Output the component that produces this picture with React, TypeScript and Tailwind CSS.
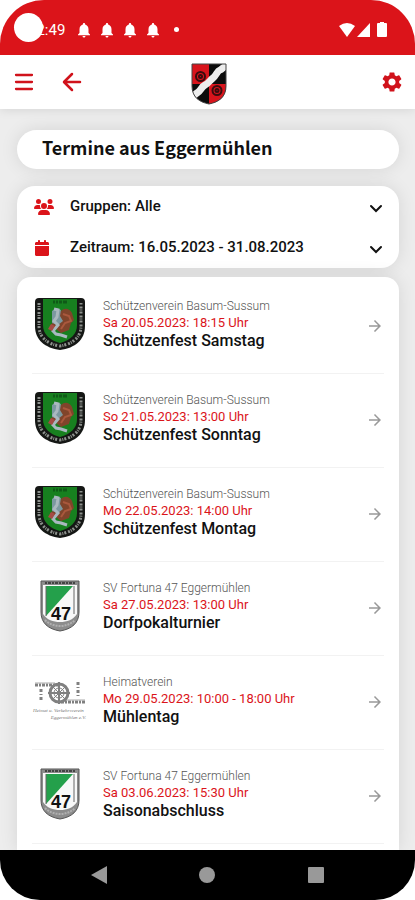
import { FaUsers, FaCalendar } from "react-icons/fa6";
import { MdArrowForward, MdNotifications, MdSettings } from "react-icons/md";

type Club = "schuetzen" | "fortuna" | "heimat";

interface Termin {
  club: Club;
  verein: string;
  zeit: string;
  titel: string;
}

const termine: Termin[] = [
  { club: "schuetzen", verein: "Schützenverein Basum-Sussum", zeit: "Sa 20.05.2023: 18:15 Uhr", titel: "Schützenfest Samstag" },
  { club: "schuetzen", verein: "Schützenverein Basum-Sussum", zeit: "So 21.05.2023: 13:00 Uhr", titel: "Schützenfest Sonntag" },
  { club: "schuetzen", verein: "Schützenverein Basum-Sussum", zeit: "Mo 22.05.2023: 14:00 Uhr", titel: "Schützenfest Montag" },
  { club: "fortuna", verein: "SV Fortuna 47 Eggermühlen", zeit: "Sa 27.05.2023: 13:00 Uhr", titel: "Dorfpokalturnier" },
  { club: "heimat", verein: "Heimatverein", zeit: "Mo 29.05.2023: 10:00 - 18:00 Uhr", titel: "Mühlentag" },
  { club: "fortuna", verein: "SV Fortuna 47 Eggermühlen", zeit: "Sa 03.06.2023: 15:30 Uhr", titel: "Saisonabschluss" },
];

function TownArms() {
  return (
    <svg width="36" height="42" viewBox="0 0 36 42" aria-label="Wappen Eggermühlen">
      <clipPath id="arms">
        <path d="M1 1h34v22c0 11-7 16-17 18C8 39 1 34 1 23z" />
      </clipPath>
      <g clipPath="url(#arms)">
        <path fill="#0c0c0c" d="M0 0h36v42H0z" />
        <path fill="#d8141c" d="M0 0h18v21H0zM18 21h18v21H18z" />
        <path d="M38 3c-5-1-6 3-9 4s-4 6-7 8-4 5-8 7-4 6-8 8-3 5-6 6" fill="none" stroke="#eee" strokeWidth="7" />
        <g fill="none" stroke="#3a0c0e" strokeWidth="2">
          <circle cx="9.5" cy="13.5" r="4.5" />
          <circle cx="9.5" cy="13.5" r="1.5" />
          <circle cx="26" cy="27.5" r="4.5" />
          <circle cx="26" cy="27.5" r="1.5" />
        </g>
      </g>
      <path d="M1 1h34v22c0 11-7 16-17 18C8 39 1 34 1 23z" fill="none" stroke="#444" strokeWidth="1" />
    </svg>
  );
}

function SchuetzenCrest() {
  return (
    <svg width="52" height="54" viewBox="0 0 52 54" aria-hidden="true">
      <path d="M5 1h42q4 0 4 4v24c0 14-10 22-25 24C11 51 1 43 1 29V5q0-4 4-4z" fill="#151715" />
      <path d="M5 6v23c0 11 8 18 21 20 13-2 21-9 21-20V6" fill="none" stroke="#8d918d" strokeWidth="3" strokeDasharray="2 1 1 1 2 2" />
      <path d="M9 2h34v26c0 9-6 15-17 18C15 43 9 37 9 28z" fill="#17801f" />
      <path d="M19 5h2m1 0h2m1 0h3m1 0h4" stroke="#0f5a17" strokeWidth="3" />
      <path d="M27 14c4-4 9-2 11 2l2 7-3 3-2 7-8 3-5-4-6-3 4-5-1-5z" fill="#80442b" />
      <path d="m29 17 6 2 2 5-6 2-4 6" fill="none" stroke="#a9583d" strokeWidth="2" />
      <path d="m18 14 4-3 5 2-1 6 3 5-5 4-6-2z" fill="#7b98a0" />
      <path d="m20 12 4 1-1 7-3 4 4 4-5 6 3 3 5 1 6 2" fill="none" stroke="#a9b8bf" strokeWidth="3" />
      <path d="m17 27 4 2-3 5-4-2z" fill="#a64b45" />
    </svg>
  );
}

function FortunaCrest() {
  return (
    <svg width="40" height="52" viewBox="0 0 40 52" aria-hidden="true">
      <path d="M1 1h38v31c0 11-7 17-19 19C8 49 1 43 1 32z" fill="#8c8c8c" stroke="#555" />
      <path d="M3 5h34v29c-4 6-10 8-17 8S7 40 3 34z" fill="#f8f8f8" />
      <path d="M6 6h27L6 36z" fill="#24a04b" />
      <path d="M6 6v30M34 6v28" stroke="#666" strokeWidth="1" />
      <path d="M5 3h30" stroke="#444" strokeWidth="2" strokeDasharray="2 1 3 1" />
      <path d="M5 40c8 8 22 8 30 0" fill="none" stroke="#b0b0b0" strokeWidth="2" strokeDasharray="2 1" />
      <text x="21" y="40" textAnchor="middle" fontSize="18" fontWeight="700" fontFamily="Liberation Sans, sans-serif" fill="#111">47</text>
    </svg>
  );
}

function HeimatLogo() {
  return (
    <svg width="56" height="42" viewBox="0 0 56 42" aria-hidden="true">
      <g fill="none" stroke="#808080">
        <path d="M3 6h24M29 23h25" strokeWidth="3" strokeDasharray="3 1 2 1" />
        <path d="M3 4h20M33 21h20" stroke="#aaa" strokeWidth="1" />
        <path d="M9 10v13M46 3v15" strokeWidth="3" strokeDasharray="3 2 1 2" />
        <circle cx="27" cy="14" r="9" strokeWidth="3" />
        <circle cx="27" cy="14" r="5" strokeWidth="1" />
        <path d="M27 3v22M16 14h22" strokeWidth="2" />
        <path d="m20 7 14 14M34 7 20 21" strokeWidth="1" />
      </g>
      <g fill="#777" fontFamily="Liberation Serif, serif" fontStyle="italic" fontSize="5">
        <text x="1" y="33">Heimat u. Verkehrsverein</text>
        <text x="54" y="40" textAnchor="end">Eggermühlen e.V.</text>
      </g>
    </svg>
  );
}

function ClubLogo({ club }: { club: Club }) {
  if (club === "schuetzen") return <SchuetzenCrest />;
  if (club === "fortuna") return <FortunaCrest />;
  return <HeimatLogo />;
}

function Chevron() {
  return (
    <svg className="pointer-events-none mt-1 shrink-0" width="14" height="10" viewBox="0 0 14 10" aria-hidden="true">
      <path d="m2 2 5 5 5-5" fill="none" stroke="#111" strokeWidth="2" strokeLinecap="round" />
    </svg>
  );
}

function StatusBar() {
  return (
    <div className="relative flex h-[55px] items-center bg-[#db141a] px-7 pt-1 text-white">
      <span className="absolute top-[13px] left-[14px] z-10 size-[29px] rounded-full bg-white" />
      <span className="text-[15px] leading-5">12:49</span>
      <div className="ml-2.5 flex items-center gap-[5px]">
        {[0, 1, 2, 3].map((n) => (
          <MdNotifications key={n} className="size-[18px]" />
        ))}
      </div>
      <span className="ml-3 size-[5px] rounded-full bg-white" />
      <div className="ml-auto flex items-center">
        <svg width="16" height="14" viewBox="0 0 16 14" fill="currentColor" aria-hidden="true">
          <path d="M0 3q8-6 16 0L8 14z" />
        </svg>
        <svg className="ml-0.5" width="13" height="14" viewBox="0 0 13 14" fill="currentColor" aria-hidden="true">
          <path d="M13 0v14H0z" />
        </svg>
        <svg className="ml-[7px]" width="10" height="15" viewBox="0 0 10 15" fill="currentColor" aria-hidden="true">
          <path d="M3 0h4v1h2q1 0 1 1v12q0 1-1 1H1q-1 0-1-1V2q0-1 1-1h2z" />
        </svg>
      </div>
    </div>
  );
}

export default function App() {
  return (
    <div className="bg-white font-['Roboto',sans-serif] text-[#111]">
      <div className="flex min-h-screen flex-col overflow-hidden rounded-t-[44px] rounded-b-[40px] bg-[#ededed]">
        <StatusBar />

        <header className="grid h-[54px] grid-cols-3 items-center bg-white pr-[11px] pl-3.5 text-[#d0121b] shadow-[0_1px_10px_rgba(0,0,0,0.1)]">
          <div className="flex items-center gap-7">
            <button type="button" aria-label="Menü">
              <svg width="20" height="20" viewBox="0 0 20 20" aria-hidden="true">
                <path d="M2 3h16M2 10h16M2 17h16" fill="none" stroke="currentColor" strokeWidth="2.3" strokeLinecap="round" />
              </svg>
            </button>
            <button type="button" aria-label="Zurück">
              <svg width="20" height="20" viewBox="0 0 20 20" aria-hidden="true">
                <path d="M18 10H3M10 2l-8 8 8 8" fill="none" stroke="currentColor" strokeWidth="2.5" strokeLinecap="round" strokeLinejoin="round" />
              </svg>
            </button>
          </div>
          <div className="flex justify-center pt-1">
            <TownArms />
          </div>
          <button type="button" aria-label="Einstellungen" className="justify-self-end">
            <MdSettings className="size-6" />
          </button>
        </header>

        <main className="flex grow flex-col pt-[21px] pr-4 pl-[17px]">
          <h1 className="rounded-[20px] bg-white px-[25px] pt-[5px] pb-2.5 font-['Noto_Sans_CJK_SC','Noto_Sans',sans-serif] text-lg leading-6 font-bold shadow-[0_0_18px_rgba(0,0,0,0.1)]">
            Termine aus Eggermühlen
          </h1>

          <section className="mt-[17px] rounded-[18px] bg-white pr-4 pl-[17px] text-[15px] font-medium shadow-[0_0_18px_rgba(0,0,0,0.1)]">
            <div className="flex h-[41px] items-center">
              <FaUsers className="mr-4 size-5 shrink-0 text-[#db141a]" />
              <label htmlFor="gruppen">Gruppen:</label>
              <select id="gruppen" className="ml-1 grow appearance-none bg-transparent">
                <option>Alle</option>
              </select>
              <Chevron />
            </div>
            <div className="flex h-[41px] items-center">
              <FaCalendar className="mr-5 size-4 shrink-0 text-[#db141a]" />
              <label htmlFor="zeitraum">Zeitraum:</label>
              <select id="zeitraum" className="ml-1 grow appearance-none bg-transparent">
                <option>16.05.2023 - 31.08.2023</option>
              </select>
              <Chevron />
            </div>
          </section>

          <ul className="mt-[9px] grow rounded-t-[14px] bg-white px-[15px] pt-[3px] shadow-[0_0_18px_rgba(0,0,0,0.1)]">
            {termine.map((t) => (
              <li key={t.titel} className="border-b border-[#f2f2f2]">
                <a href="#termin" className="flex items-center pt-[17px] pb-[22px]">
                  <span className="mr-[15px] flex h-[54px] w-14 shrink-0 items-center justify-center">
                    <ClubLogo club={t.club} />
                  </span>
                  <span className="flex grow flex-col leading-[18px]">
                    <span className="text-xs font-light text-[#555]">{t.verein}</span>
                    <span className="text-[13px] text-[#db141a]">{t.zeit}</span>
                    <span className="text-base leading-[18px] font-medium">{t.titel}</span>
                  </span>
                  <MdArrowForward className="mt-1 size-[18px] shrink-0 text-[#999]" />
                </a>
              </li>
            ))}
          </ul>
        </main>

        <nav className="flex h-[50px] items-center justify-around bg-black px-[45px] text-[#999]">
          <button type="button" aria-label="Zurück">
            <svg width="16" height="18" viewBox="0 0 16 18" fill="currentColor" aria-hidden="true">
              <path d="M16 0v18L0 9z" />
            </svg>
          </button>
          <button type="button" aria-label="Startseite" className="size-4 rounded-full bg-[#999]" />
          <button type="button" aria-label="Übersicht" className="size-4 rounded-[1px] bg-[#999]" />
        </nav>
      </div>
    </div>
  );
}
